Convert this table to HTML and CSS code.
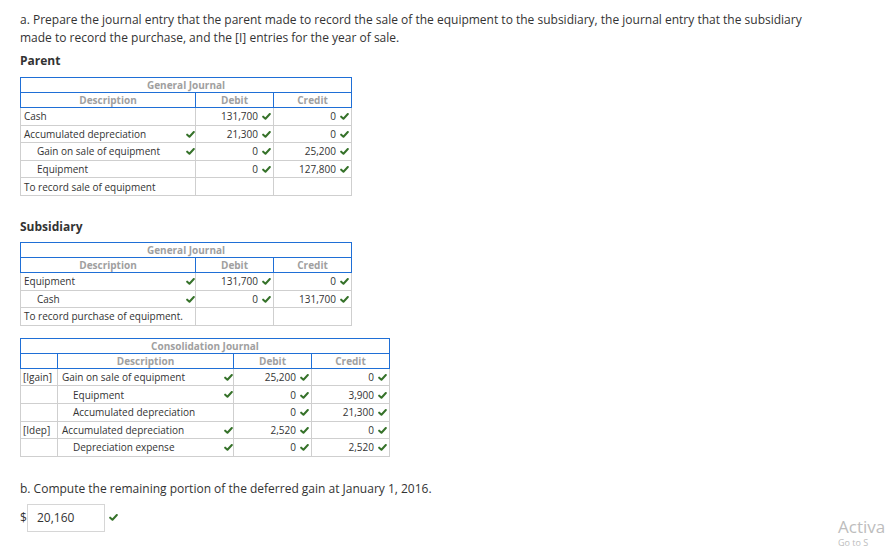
FILE: index.html
```html
<!DOCTYPE html>
<html>
<head>
<meta charset="utf-8">
<link rel="stylesheet" href="styles.css">
</head>
<body>
<svg width="0" height="0" class="defs">
  <defs>
    <symbol id="ck" viewBox="0 0 10 8">
      <path d="M1.2 4.2 L3.8 6.6 L8.8 1.2" fill="none" stroke="#36722a" stroke-width="2.3" stroke-linecap="round" stroke-linejoin="round"/>
    </symbol>
  </defs>
</svg>
<div class="page">
  <p class="intro">a. Prepare the journal entry that the parent made to record the sale of the equipment to the subsidiary, the journal entry that the subsidiary made to record the purchase, and the [I] entries for the year of sale.</p>

  <h3 class="label">Parent</h3>
  <table class="jt jt-parent">
    <colgroup><col class="w-desc"><col class="w-num"><col class="w-num"></colgroup>
    <tr class="h1"><th colspan="3">General Journal</th></tr>
    <tr class="h2"><th>Description</th><th>Debit</th><th>Credit</th></tr>
    <tr><td class="desc"><span>Cash</span></td><td class="num">131,700<svg class="ck"><use href="#ck"/></svg></td><td class="num">0<svg class="ck"><use href="#ck"/></svg></td></tr>
    <tr><td class="desc"><span>Accumulated depreciation</span><svg class="ck dck"><use href="#ck"/></svg></td><td class="num">21,300<svg class="ck"><use href="#ck"/></svg></td><td class="num">0<svg class="ck"><use href="#ck"/></svg></td></tr>
    <tr><td class="desc ind"><span>Gain on sale of equipment</span><svg class="ck dck"><use href="#ck"/></svg></td><td class="num">0<svg class="ck"><use href="#ck"/></svg></td><td class="num">25,200<svg class="ck"><use href="#ck"/></svg></td></tr>
    <tr><td class="desc ind"><span>Equipment</span></td><td class="num">0<svg class="ck"><use href="#ck"/></svg></td><td class="num">127,800<svg class="ck"><use href="#ck"/></svg></td></tr>
    <tr><td class="desc"><span>To record sale of equipment</span></td><td class="num"></td><td class="num"></td></tr>
  </table>

  <h3 class="label label-sub">Subsidiary</h3>
  <table class="jt jt-parent">
    <colgroup><col class="w-desc"><col class="w-num"><col class="w-num"></colgroup>
    <tr class="h1"><th colspan="3">General Journal</th></tr>
    <tr class="h2"><th>Description</th><th>Debit</th><th>Credit</th></tr>
    <tr><td class="desc"><span>Equipment</span><svg class="ck dck"><use href="#ck"/></svg></td><td class="num">131,700<svg class="ck"><use href="#ck"/></svg></td><td class="num">0<svg class="ck"><use href="#ck"/></svg></td></tr>
    <tr><td class="desc ind"><span>Cash</span><svg class="ck dck"><use href="#ck"/></svg></td><td class="num">0<svg class="ck"><use href="#ck"/></svg></td><td class="num">131,700<svg class="ck"><use href="#ck"/></svg></td></tr>
    <tr><td class="desc"><span>To record purchase of equipment.</span></td><td class="num"></td><td class="num"></td></tr>
  </table>

  <table class="jt jt-cons">
    <colgroup><col class="w-code"><col class="w-desc2"><col class="w-num"><col class="w-num"></colgroup>
    <tr class="h1"><th colspan="4">Consolidation Journal</th></tr>
    <tr class="h2"><th></th><th>Description</th><th>Debit</th><th>Credit</th></tr>
    <tr><td class="code">[Igain]</td><td class="desc"><span>Gain on sale of equipment</span><svg class="ck dck"><use href="#ck"/></svg></td><td class="num">25,200<svg class="ck"><use href="#ck"/></svg></td><td class="num">0<svg class="ck"><use href="#ck"/></svg></td></tr>
    <tr><td class="code"></td><td class="desc ind"><span>Equipment</span><svg class="ck dck"><use href="#ck"/></svg></td><td class="num">0<svg class="ck"><use href="#ck"/></svg></td><td class="num">3,900<svg class="ck"><use href="#ck"/></svg></td></tr>
    <tr><td class="code"></td><td class="desc ind"><span>Accumulated depreciation</span></td><td class="num">0<svg class="ck"><use href="#ck"/></svg></td><td class="num">21,300<svg class="ck"><use href="#ck"/></svg></td></tr>
    <tr><td class="code">[Idep]</td><td class="desc"><span>Accumulated depreciation</span><svg class="ck dck"><use href="#ck"/></svg></td><td class="num">2,520<svg class="ck"><use href="#ck"/></svg></td><td class="num">0<svg class="ck"><use href="#ck"/></svg></td></tr>
    <tr><td class="code"></td><td class="desc ind"><span>Depreciation expense</span><svg class="ck dck"><use href="#ck"/></svg></td><td class="num">0<svg class="ck"><use href="#ck"/></svg></td><td class="num">2,520<svg class="ck"><use href="#ck"/></svg></td></tr>
  </table>

  <p class="qb">b. Compute the remaining portion of the deferred gain at January 1, 2016.</p>
  <div class="answer">
    <span class="dollar">$</span>
    <div class="inp">20,160</div>
    <svg class="ck ack"><use href="#ck"/></svg>
  </div>
</div>
<div class="watermark">
  <div class="wm1">Activa</div>
  <div class="wm2">Go to S</div>
</div>
</body>
</html>
```

FILE: styles.css
```css
html, body {
  margin: 0;
  padding: 0;
  background: #fff;
  overflow: hidden;
}
body {
  width: 885px;
  height: 549px;
  position: relative;
  font-family: "Open Sans", "DejaVu Sans", sans-serif;
  color: #333;
}
.defs { position: absolute; }
.page {
  padding: 11px 20px 0 20px;
}
.intro {
  margin: 0;
  font-size: 12px;
  line-height: 18px;
  width: 800px;
}
.label {
  margin: 5px 0 7px 0;
  font-size: 12px;
  line-height: 18px;
  font-weight: 700;
  color: #333;
}
.label-sub {
  margin-top: 22px;
  margin-bottom: 6px;
}
.jt {
  border-collapse: collapse;
  font-size: 10px;
  color: #333;
  table-layout: fixed;
}
.jt-parent { width: 332px; }
.jt-cons { width: 369px; margin-top: 12px; }
.w-desc { width: 175px; }
.w-num { width: 78px; }
.w-code { width: 37px; }
.w-desc2 { width: 176px; }
.jt th {
  border: 1px solid #1f6fd6;
  color: #a0a0a0;
  font-weight: 700;
  font-size: 10px;
  height: 14px;
  line-height: 14px;
  padding: 0;
  text-align: center;
}
.jt td {
  border: 1px solid #cfcfcf;
  height: 16.6px;
  line-height: 16px;
  padding: 0;
  white-space: nowrap;
}
.jt td.desc {
  position: relative;
  padding-left: 3px;
  padding-right: 1px;
}
.jt td.desc.ind { padding-left: 16px; }
.jt-cons td.desc { padding-left: 4px; }
.jt-cons td.desc.ind { padding-left: 15px; }
.jt td.code {
  padding-left: 2px;
}
.jt td.num {
  text-align: right;
  padding-right: 2px;
}
.ck {
  width: 9px;
  height: 7px;
  display: inline-block;
  margin-left: 4px;
}
.dck {
  position: absolute;
  right: 0;
  top: 5px;
}
.qb {
  margin: 23px 0 0 0;
  font-size: 12px;
  line-height: 18px;
}
.answer {
  display: flex;
  align-items: center;
  margin-top: 6px;
  font-size: 12px;
}
.dollar {
  width: 7px;
  color: #333;
}
.inp {
  box-sizing: border-box;
  width: 78px;
  height: 28px;
  border: 1px solid #d6d6d6;
  padding-left: 9px;
  line-height: 26px;
  color: #333;
}
.ack {
  margin-left: 4px;
}
.watermark {
  position: absolute;
  left: 838px;
  top: 517px;
  color: #bdbdbd;
  white-space: nowrap;
  font-family: "Open Sans", "Noto Sans", sans-serif;
}
.wm1 { font-size: 17px; line-height: 19px; }
.wm2 { font-size: 9px; line-height: 11px; margin-top: 1px; }
```
